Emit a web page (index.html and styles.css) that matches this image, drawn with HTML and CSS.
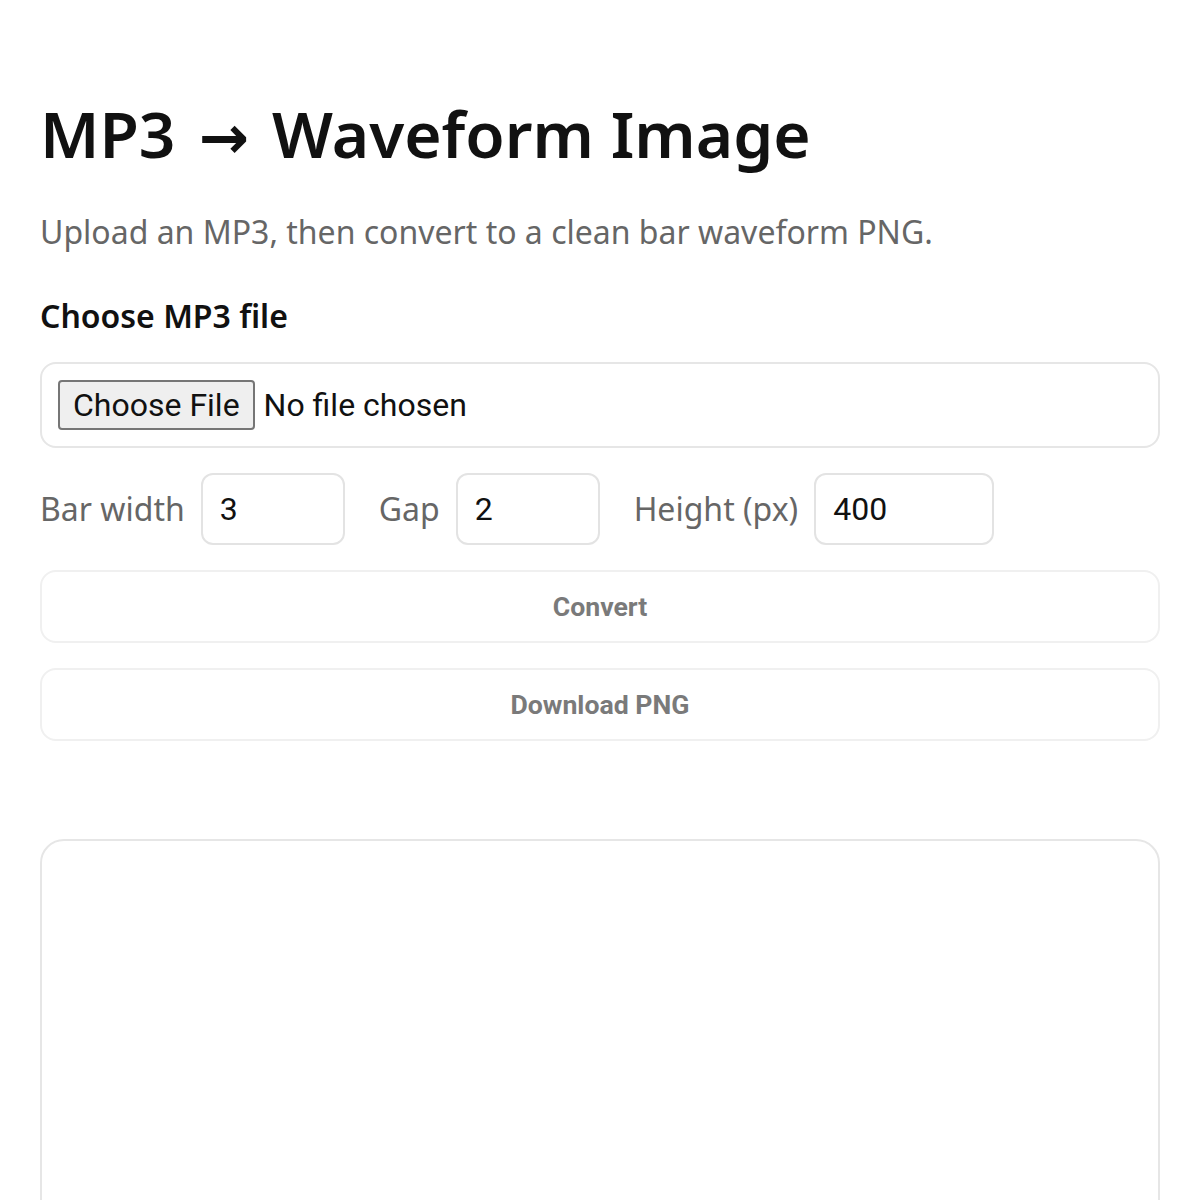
FILE: index.html
```html
<!DOCTYPE html>
<html lang="en">
<head>
<meta charset="utf-8">
<title>MP3 → Waveform Image</title>
<link rel="stylesheet" href="styles.css">
</head>
<body>
<main class="page">
  <h1 class="title">MP3 <span class="arrow">→</span> Waveform Image</h1>
  <p class="subtitle">Upload an MP3, then convert to a clean bar waveform PNG.</p>
  <label class="field-label" for="file">Choose MP3 file</label>
  <div class="file-box">
    <input id="file" class="file-input" type="file" accept=".mp3,audio/mpeg">
  </div>
  <div class="options">
    <div class="opt">
      <span class="opt-label">Bar width</span>
      <input class="num num-sm" type="number" value="3">
    </div>
    <div class="opt">
      <span class="opt-label">Gap</span>
      <input class="num num-sm" type="number" value="2">
    </div>
    <div class="opt">
      <span class="opt-label">Height (px)</span>
      <input class="num num-lg" type="number" value="400">
    </div>
  </div>
  <button class="action" disabled>Convert</button>
  <button class="action" disabled>Download PNG</button>
  <div class="status"></div>
  <div class="preview"></div>
</main>
</body>
</html>
```

FILE: styles.css
```css
html, body {
  margin: 0;
  padding: 0;
  background: #ffffff;
}

body {
  font-family: "Noto Sans", "Open Sans", sans-serif;
  color: #111111;
}

.page {
  padding: 90px 40px 0 40px;
  display: flex;
  flex-direction: column;
}

.title {
  margin: 0;
  font-size: 64px;
  font-weight: 600;
  line-height: 87px;
  color: #111111;
}

.arrow {
  font-family: "DejaVu Sans", sans-serif;
  font-weight: 700;
  font-size: 60px;
  line-height: 0;
  margin: 0 6px 0 7px;
}

.subtitle {
  margin: 33px 0 0 0;
  font-size: 32px;
  line-height: 44px;
  color: #666666;
}

.field-label {
  margin-top: 40px;
  font-size: 32px;
  line-height: 44px;
  font-weight: 600;
  color: #111111;
}

.file-box {
  margin-top: 24px;
  border: 2px solid #e6e6e6;
  border-radius: 16px;
  padding: 16px;
  height: 86px;
  box-sizing: border-box;
  display: flex;
  align-items: center;
}

.file-input {
  font-family: Roboto, "Liberation Sans", sans-serif;
  font-size: 32px;
  color: #111111;
}

.file-input::file-selector-button {
  font-family: Roboto, "Liberation Sans", sans-serif;
  font-size: 32px;
  height: 50px;
  padding: 0 13px;
  margin-right: 9px;
  border: 2px solid #767676;
  border-radius: 4px;
  background: #efefef;
  color: #111111;
}

.options {
  margin-top: 25px;
  display: flex;
  align-items: center;
  gap: 34px;
}

.opt {
  display: flex;
  align-items: center;
  gap: 16px;
}

.opt-label {
  font-size: 32px;
  line-height: 44px;
  color: #666666;
}

.num {
  height: 72px;
  box-sizing: border-box;
  border: 2px solid #e3e3e3;
  border-radius: 12px;
  padding: 0 17px;
  font-family: Roboto, "Liberation Sans", sans-serif;
  font-size: 32px;
  color: #111111;
  background: #ffffff;
  outline: none;
  -moz-appearance: textfield;
}

.num::-webkit-outer-spin-button,
.num::-webkit-inner-spin-button {
  -webkit-appearance: none;
  margin: 0;
}

.num-sm { width: 144px; }
.num-lg { width: 180px; }

.action {
  margin-top: 25px;
  height: 73px;
  width: 100%;
  box-sizing: border-box;
  border: 2px solid #f0f0f0;
  border-radius: 16px;
  background: #ffffff;
  font-family: Roboto, "Liberation Sans", sans-serif;
  font-size: 26.67px;
  font-weight: 700;
  color: #7a7a7a;
}

.status {
  height: 98px;
}

.preview {
  height: 400px;
  border: 2px solid #e6e6e6;
  border-radius: 24px;
  box-sizing: border-box;
}
```
